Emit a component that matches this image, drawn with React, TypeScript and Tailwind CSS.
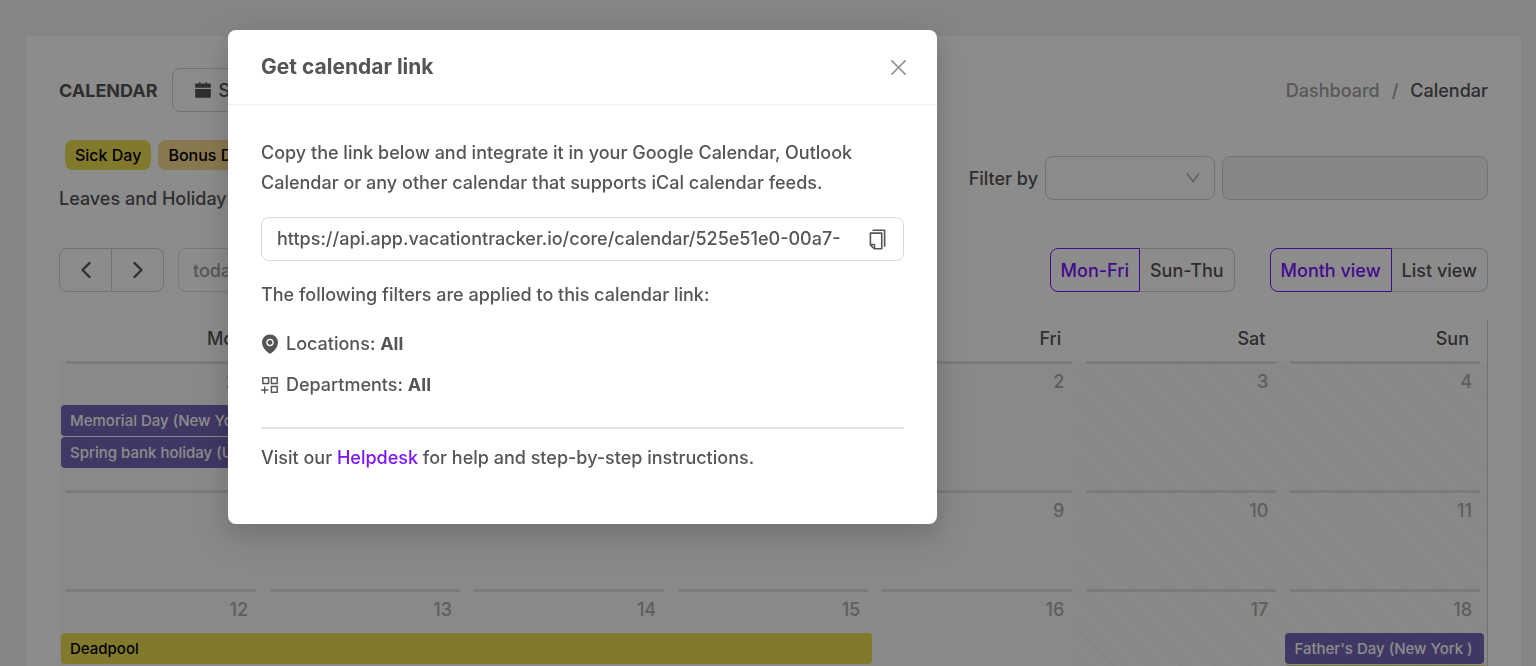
import type { ReactNode } from "react";
import {
  AiFillCalendar,
  AiFillEnvironment,
  AiOutlineAppstoreAdd,
  AiOutlineClose,
  AiOutlineCopy,
  AiOutlineDown,
} from "react-icons/ai";
import { ChevronLeft, ChevronRight } from "lucide-react";

type CalendarEvent = { title: string; className: string };
type Day = { date: number; events?: CalendarEvent[] };

const holiday = "w-[calc(100%-3px)] bg-[#7466b6] text-white";
const sick = "bg-[#ecde50] text-black";

const weekdays = ["Mon", "Tue", "Wed", "Thu", "Fri", "Sat", "Sun"];

const weeks: { height: string; days: Day[] }[] = [
  {
    height: "h-[129px]",
    days: [
      {
        date: 29,
        events: [
          { title: "Memorial Day (New York )", className: holiday },
          { title: "Spring bank holiday (UK)", className: holiday },
        ],
      },
      { date: 30 },
      { date: 31 },
      { date: 1 },
      { date: 2 },
      { date: 3 },
      { date: 4 },
    ],
  },
  {
    height: "h-[99px]",
    days: [5, 6, 7, 8, 9, 10, 11].map((date) => ({ date })),
  },
  {
    height: "h-[129px]",
    days: [
      {
        date: 12,
        events: [{ title: "Deadpool", className: "w-[calc(400%+3px)] " + sick }],
      },
      { date: 13 },
      { date: 14 },
      { date: 15 },
      { date: 16 },
      { date: 17 },
      {
        date: 18,
        events: [
          { title: "Father's Day (New York )", className: holiday },
          { title: "", className: "w-full " + sick },
        ],
      },
    ],
  },
];

function DayCell({ day, weekend }: { day: Day; weekend: boolean }) {
  return (
    <td
      className={
        weekend
          ? "bg-[repeating-linear-gradient(45deg,#fafafa_0px,#fafafa_12px,#f5f5f5_12px,#fafafa_24px)] p-0 align-top"
          : "bg-[#fafafa] p-0 align-top"
      }
    >
      <div className="mx-[7px] border-t-3 border-[#dedede] px-2 pt-[3px] text-right leading-[30px] text-[#ababab]">
        {day.date}
      </div>
      {day.events && (
        <div className="relative h-7">
          <div className="absolute inset-x-0 top-2 z-10 flex flex-col gap-px pl-[2px]">
            {day.events.map((event, i) => (
              <div
                key={i}
                className={
                  "h-[31px] shrink-0 overflow-hidden rounded px-[9px] text-[15px] leading-[31px] font-medium whitespace-nowrap " +
                  event.className
                }
              >
                {event.title}
              </div>
            ))}
          </div>
        </div>
      )}
    </td>
  );
}

function Segmented({ active, other }: { active: string; other: string }) {
  return (
    <div className="flex h-11">
      <button className="rounded-l-lg border border-[#7b14ff] px-[10px] text-[#7b14ff]">
        {active}
      </button>
      <button className="rounded-r-lg border border-l-0 border-[#d0d0d0] px-[10px]">
        {other}
      </button>
    </div>
  );
}

function FilterLine({ icon, label }: { icon: ReactNode; label: string }) {
  return (
    <li className="flex items-center gap-[5px]">
      {icon}
      <span>
        {label}: <strong className="font-bold">All</strong>
      </span>
    </li>
  );
}

function CalendarPage() {
  return (
    <main className="min-h-screen bg-[#f0f2f5] pt-9 pr-[15px] pl-[26px]">
      <section className="bg-white px-[33px] pt-8">
        <header className="flex items-center justify-between">
          <div className="flex items-center gap-[14px]">
            <h1 className="text-[18px] font-bold">CALENDAR</h1>
            <button className="flex h-11 items-center gap-[6px] rounded-lg border border-[#d0d0d0] px-5">
              <AiFillCalendar size={20} />
              Subscribe
            </button>
          </div>
          <nav className="flex gap-3" aria-label="Breadcrumb">
            <a href="#dashboard" className="text-[#a0a0a0]">
              Dashboard
            </a>
            <span className="text-[#a0a0a0]">/</span>
            <a href="#calendar">Calendar</a>
          </nav>
        </header>

        <div className="mt-7 flex justify-between">
          <div>
            <div className="flex gap-[7px] pl-[6px] text-[16px] leading-[30px] font-medium text-black">
              <span className="rounded-lg bg-[#ecde50] px-[10px]">Sick Day</span>
              <span className="rounded-lg bg-[#f7db90] px-[10px]">Bonus Day</span>
            </div>
            <p className="mt-[14px] leading-[30px]">Leaves and Holidays</p>
          </div>
          <div className="mt-4 flex h-11 items-center gap-[7px]">
            <label htmlFor="filter">Filter by</label>
            <div className="relative h-full w-[170px]">
              <select
                id="filter"
                className="h-full w-full appearance-none rounded-lg border border-[#d0d0d0] bg-white"
              />
              <AiOutlineDown
                size={18}
                className="pointer-events-none absolute top-[13px] right-[13px] text-[#a8a8a8]"
              />
            </div>
            <input
              disabled
              aria-label="Filter value"
              className="h-full w-[266px] rounded-lg border border-[#d0d0d0] bg-[#f5f5f5]"
            />
          </div>
        </div>

        <div className="mt-[34px] flex justify-between">
          <div className="flex h-11 gap-[14px]">
            <div className="flex">
              <button
                aria-label="Previous month"
                className="flex w-[53px] items-center justify-center rounded-l-lg border border-[#d0d0d0]"
              >
                <ChevronLeft size={28} strokeWidth={2} />
              </button>
              <button
                aria-label="Next month"
                className="flex w-[52px] items-center justify-center rounded-r-lg border border-l-0 border-[#d0d0d0]"
              >
                <ChevronRight size={28} strokeWidth={2} />
              </button>
            </div>
            <button className="rounded-lg border border-[#dcdcdc] px-[14px] text-[#a0a0a0]">
              today
            </button>
          </div>
          <div className="flex gap-[35px]">
            <Segmented active="Mon-Fri" other="Sun-Thu" />
            <Segmented active="Month view" other="List view" />
          </div>
        </div>

        <table className="mt-7 w-full table-fixed border-collapse border-r border-[#cfcfcf]">
          <thead>
            <tr className="h-[41px]">
              {weekdays.map((name) => (
                <th key={name} className="p-0 pr-[18px] pb-1 text-right font-medium">
                  {name}
                </th>
              ))}
            </tr>
          </thead>
          <tbody>
            {weeks.map((week, w) => (
              <tr key={w} className={week.height}>
                {week.days.map((day, d) => (
                  <DayCell key={day.date} day={day} weekend={d > 4} />
                ))}
              </tr>
            ))}
          </tbody>
        </table>
      </section>
    </main>
  );
}

function CalendarLinkDialog() {
  return (
    <div className="fixed inset-0 z-20 overflow-hidden bg-black/45 pt-[30px] pl-[228px]">
      <div
        role="dialog"
        aria-modal="true"
        aria-labelledby="dialog-title"
        className="max-w-[709px] rounded-lg bg-white pb-[51px] leading-[30px] text-[#555555] shadow-[0_8px_21px_rgba(0,0,0,0.12),0_12px_37px_10px_rgba(0,0,0,0.08)]"
      >
        <div className="flex items-center justify-between border-b border-[#f0f0f0] px-[33px] py-[22px]">
          <h2 id="dialog-title" className="text-[21px] font-bold">
            Get calendar link
          </h2>
          <button aria-label="Close" className="-mr-[6px] text-[#999999]">
            <AiOutlineClose size={23} />
          </button>
        </div>
        <div className="px-[33px] pt-[33px]">
          <p>
            Copy the link below and integrate it in your Google Calendar, Outlook Calendar or any
            other calendar that supports iCal calendar feeds.
          </p>
          <div className="mt-[19px] flex h-11 items-center gap-[5px] rounded-lg border border-[#d9d9d9] pr-[14px] pl-[15px]">
            <input
              readOnly
              aria-label="Calendar link"
              value="https://api.app.vacationtracker.io/core/calendar/525e51e0-00a7-"
              className="min-w-0 flex-1 outline-none"
            />
            <button aria-label="Copy link">
              <AiOutlineCopy size={23} />
            </button>
          </div>
          <p className="mt-[19px]">The following filters are applied to this calendar link:</p>
          <ul className="-ml-[2px] mt-[19px] flex flex-col gap-[11px]">
            <FilterLine icon={<AiFillEnvironment size={22} />} label="Locations" />
            <FilterLine icon={<AiOutlineAppstoreAdd size={22} />} label="Departments" />
          </ul>
          <hr className="mt-[27px] mb-[14px] border-t-2 border-[#e4e4e4]" />
          <p>
            Visit our{" "}
            <a href="#helpdesk" className="text-[#7b14ff]">
              Helpdesk
            </a>{" "}
            for help and step-by-step instructions.
          </p>
        </div>
      </div>
    </div>
  );
}

export default function App() {
  return (
    <div className="h-screen overflow-hidden font-['Inter',sans-serif] text-[18px] font-medium text-[#555555]">
      <CalendarPage />
      <CalendarLinkDialog />
    </div>
  );
}
